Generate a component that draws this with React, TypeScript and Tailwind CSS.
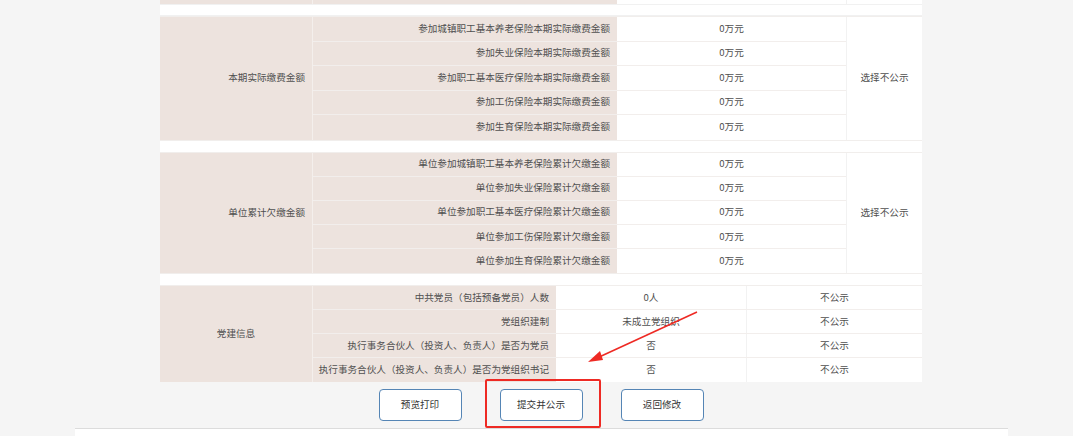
import React from "react";

const font = { fontFamily: '"Noto Sans CJK SC", "Noto Sans", sans-serif' };

interface SectionProps {
  label: string;
  rows: string[];
  value: string;
  note: string;
  rowH: string;
}

// 左侧标签 + 右侧合并「选择不公示」的分组
function MergedSection({ label, rows, value, note, rowH }: SectionProps) {
  return (
    <div className="flex border-y border-[#f1eeec]">
      <div className="w-[153px] shrink-0 bg-[#ede3de] border-r border-[#f4efec] flex items-center justify-end pr-[7px]">
        {label}
      </div>
      <div className="flex-1">
        {rows.map((r, i) => (
          <div
            key={r}
            className={`flex ${rowH} ${i < rows.length - 1 ? "border-b border-[#f2eeec]" : ""}`}
          >
            <div className="w-[304px] shrink-0 bg-[#ede3de] flex items-center justify-end pr-[7px]">
              {r}
            </div>
            <div className="flex-1 flex items-center justify-center">{value}</div>
          </div>
        ))}
      </div>
      <div className="w-[76px] shrink-0 border-l border-[#f2f2f2] flex items-center justify-center">
        {note}
      </div>
    </div>
  );
}

const partyRows = [
  ["中共党员（包括预备党员）人数", "0人"],
  ["党组织建制", "未成立党组织"],
  ["执行事务合伙人（投资人、负责人）是否为党员", "否"],
  ["执行事务合伙人（投资人、负责人）是否为党组织书记", "否"],
];

function Gap() {
  return <div className="h-[11px] bg-white" />;
}

export default function App() {
  return (
    <div
      className="relative w-[1073px] h-[436px] overflow-hidden bg-[#f5f5f5] text-[9.6px] leading-none text-[#505050]"
      style={font}
    >
      <div className="ml-[160px] w-[762px] bg-white">
        {/* 上一组的最后一行 */}
        <div className="flex h-[4px]">
          <div className="w-[153px] bg-[#ede3de] border-r border-[#f4efec]" />
          <div className="w-[304px] bg-[#ede3de]" />
          <div className="w-[229px] bg-white" />
          <div className="flex-1 border-l border-[#f2f2f2]" />
        </div>
        <div className="h-[12px] border-y border-[#f1f1f1]" />

        <MergedSection
          label="本期实际缴费金额"
          rows={[
            "参加城镇职工基本养老保险本期实际缴费金额",
            "参加失业保险本期实际缴费金额",
            "参加职工基本医疗保险本期实际缴费金额",
            "参加工伤保险本期实际缴费金额",
            "参加生育保险本期实际缴费金额",
          ]}
          value="0万元"
          note="选择不公示"
          rowH="h-[24.5px]"
        />
        <Gap />
        <MergedSection
          label="单位累计欠缴金额"
          rows={[
            "单位参加城镇职工基本养老保险累计欠缴金额",
            "单位参加失业保险累计欠缴金额",
            "单位参加职工基本医疗保险累计欠缴金额",
            "单位参加工伤保险累计欠缴金额",
            "单位参加生育保险累计欠缴金额",
          ]}
          value="0万元"
          note="选择不公示"
          rowH="h-[24.1px]"
        />
        <Gap />

        {/* 党建信息 */}
        <div className="flex border-t border-[#f1eeec]">
          <div className="w-[153px] shrink-0 bg-[#ede3de] border-r border-[#f4efec] flex items-center justify-center">
            党建信息
          </div>
          <div className="flex-1">
            {partyRows.map(([k, v], i) => (
              <div
                key={k}
                className={`flex h-[24px] ${i < partyRows.length - 1 ? "border-b border-[#f2eeec]" : ""}`}
              >
                <div className="w-[243px] shrink-0 bg-[#ede3de] flex items-center justify-end pr-[7px]">
                  {k}
                </div>
                <div className="w-[190px] shrink-0 flex items-center justify-center">{v}</div>
                <div className="flex-1 border-l border-[#f2f2f2] flex items-center justify-center">
                  不公示
                </div>
              </div>
            ))}
          </div>
        </div>
      </div>

      {/* 按钮 */}
      <div className="ml-[160px] w-[762px] flex justify-center gap-[38px] pt-[7px] h-[46px]">
        {["预览打印", "提交并公示", "返回修改"].map((t) => (
          <button
            key={t}
            className="w-[83px] h-[32px] bg-white border border-[#5585b5] rounded-[4px] text-[9.6px] text-[#333]"
            style={font}
          >
            {t}
          </button>
        ))}
      </div>

      <div className="ml-[75px] w-[933px] h-[20px] bg-white border-t border-[#dcdcdc]" />

      {/* 标注：红框与箭头 */}
      <div className="absolute left-[485px] top-[379px] w-[116px] h-[49px] border-2 border-[#ee2a24] rounded-[2px]" />
      <svg className="absolute left-0 top-0" width="1073" height="436">
        <line x1="697" y1="312" x2="597" y2="358" stroke="#ee2a24" strokeWidth="1.6" />
        <polygon points="588,362 600,351 603,360" fill="#ee2a24" />
      </svg>
    </div>
  );
}
